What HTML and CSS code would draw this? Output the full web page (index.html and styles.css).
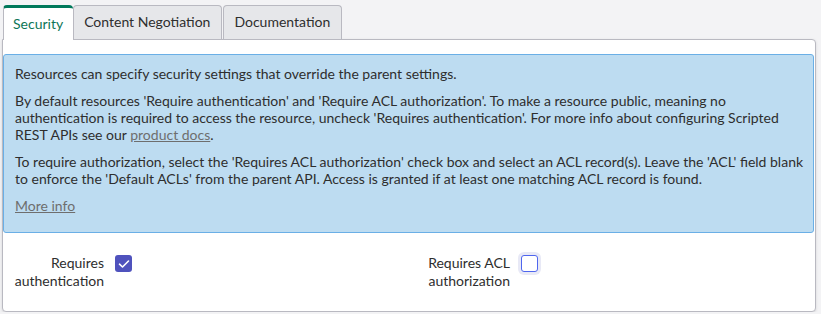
FILE: index.html
```html
<!DOCTYPE html>
<html lang="en">
<head>
    <meta charset="UTF-8">
    <title>Scripted REST Resource - Security</title>
    <link rel="stylesheet" href="styles.css">
</head>
<body>
    <div class="tabs">
        <div class="tab activo">Security</div>
        <div class="tab">Content Negotiation</div>
        <div class="tab">Documentation</div>
    </div>

    <div class="panel">
        <div class="aviso">
            <p>Resources can specify security settings that override the parent settings.</p>
            <p>By default resources 'Require authentication' and 'Require ACL authorization'. To make a resource public, meaning no authentication is required to access the resource, uncheck 'Requires authentication'. For more info about configuring Scripted REST APIs see our <a href="#">product docs</a>.</p>
            <p>To require authorization, select the 'Requires ACL authorization' check box and select an ACL record(s). Leave the 'ACL' field blank to enforce the 'Default ACLs' from the parent API. Access is granted if at least one matching ACL record is found.</p>
            <p><a href="#">More info</a></p>
        </div>

        <div class="campos">
            <div class="campo">
                <label>Requires authentication</label>
                <span class="check marcado">
                    <svg width="12" height="10" viewBox="0 0 12 10"><path d="M1.5 5.2 L4.5 8 L10.5 2" fill="none" stroke="#fff" stroke-width="1.6" stroke-linecap="round" stroke-linejoin="round"/></svg>
                </span>
            </div>
            <div class="campo">
                <label>Requires ACL authorization</label>
                <span class="check foco"></span>
            </div>
        </div>
    </div>
</body>
</html>
```

FILE: styles.css
```css
body {
    font-family: 'Lato', 'Liberation Sans', sans-serif;
    background-color: #f3f3f5;
    margin: 0;
    padding: 4px 5px 0 2px;
    color: #2e2e2e;
    font-size: 14px;
}

.tabs {
    display: flex;
    align-items: flex-end;
    height: 35px;
    padding-left: 1px;
}

.tab {
    height: 34px;
    box-sizing: border-box;
    padding: 0 11px 2px 10px;
    display: flex;
    align-items: center;
    font-size: 14px;
    color: #2e2e2e;
    background-color: #e6e7ea;
    border: 1px solid #b9b9c1;
    border-bottom: none;
    border-radius: 4px 4px 0 0;
    margin-right: 1px;
}

.tab.activo {
    height: 35px;
    background-color: #fff;
    color: #0d7657;
    border: none;
    border-top: 3px solid #00785a;
    border-left: 1px solid #b9b9c1;
    padding: 0 10px 1px 9px;
    margin-right: 0;
    position: relative;
    z-index: 1;
    margin-bottom: -1px;
}

.panel {
    background-color: #fff;
    border: 1px solid #b9b9c1;
    border-radius: 0 4px 4px 4px;
    box-shadow: 0 1px 3px rgba(0, 0, 0, 0.12);
    padding: 14px 1px 21px 0;
}

.aviso {
    background-color: #bddcf1;
    border: 1px solid #6aafe6;
    border-radius: 3px;
    padding: 10px 2px 18px 11px;
    line-height: 17px;
}

.aviso p {
    margin: 0 0 10px 0;
}

.aviso p:last-child {
    margin-bottom: 0;
}

.aviso a {
    color: #6e6e6e;
}

.campos {
    display: grid;
    grid-template-columns: 406px 1fr;
    padding-top: 21px;
}

.campo {
    display: flex;
    align-items: flex-start;
    gap: 11px;
}

.campo label {
    width: 101px;
    text-align: right;
    line-height: 18px;
    font-size: 14px;
}

.check {
    width: 17px;
    height: 17px;
    box-sizing: border-box;
    border-radius: 3px;
    display: flex;
    align-items: center;
    justify-content: center;
    margin-top: 1px;
}

.check.marcado {
    background-color: #4f52bd;
}

.check.foco {
    border: 1.5px solid #4f66ee;
    background-color: #fff;
    box-shadow: 0 0 0 3px #e8e9f6;
}
```
